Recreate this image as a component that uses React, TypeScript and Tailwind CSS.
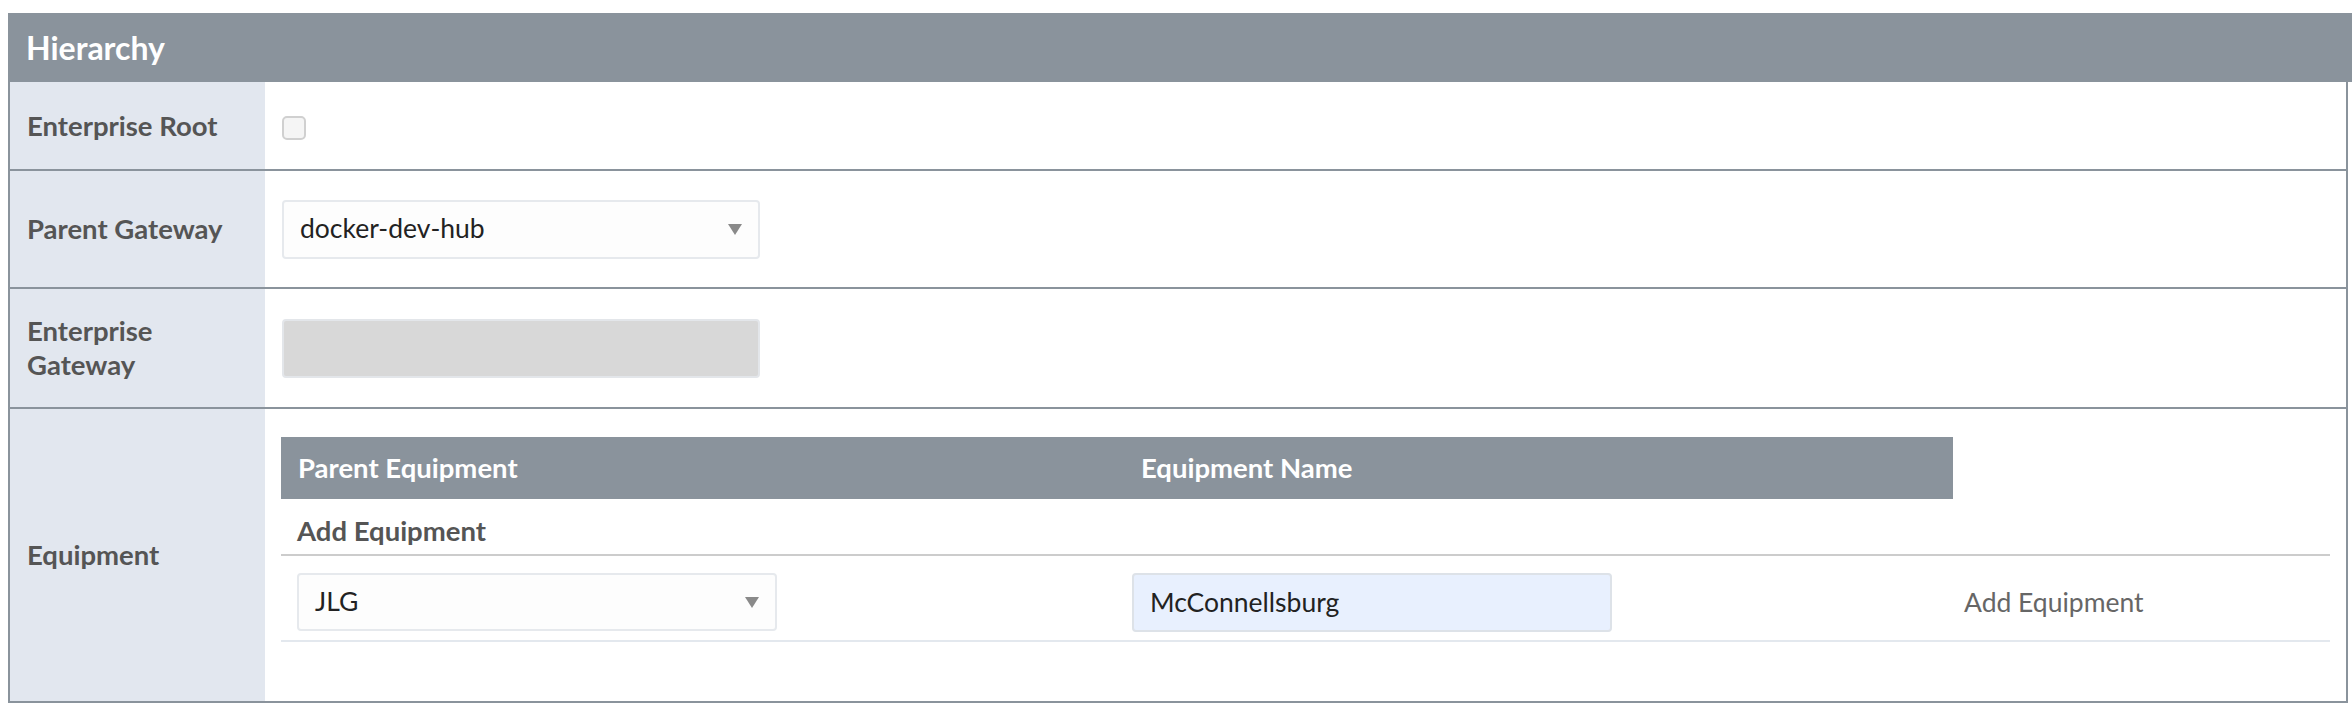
const font = { fontFamily: "Lato, 'Open Sans', sans-serif" };

function Caret() {
  return (
    <svg width="14" height="11" viewBox="0 0 14 11" className="shrink-0">
      <polygon points="0,0 14,0 7,11" fill="#8a8a8a" />
    </svg>
  );
}

function SelectBox({ value, width, height }: { value: string; width: string; height: string }) {
  return (
    <div
      className={`${width} ${height} flex items-center justify-between rounded-[4px] border-2 border-[#e6e9ed] bg-[#fdfdfd] pl-[16px] pr-[16px] text-[26.5px] text-[#222]`}
    >
      <span>{value}</span>
      <Caret />
    </div>
  );
}

function Label({ children }: { children: React.ReactNode }) {
  return (
    <div className="flex w-[255px] shrink-0 items-center bg-[#e2e7ef] pl-[17px] pr-[16px] text-[27.5px] font-bold leading-[34px] text-[#555]">
      {children}
    </div>
  );
}

export default function App() {
  return (
    <div className="min-h-[704px] bg-white pt-[13px] pl-[8px]" style={font}>
      <div className="flex h-[69px] items-center bg-[#8a939c] pl-[18px] text-[32px] font-bold text-white">
        Hierarchy
      </div>
      <div className="mr-[4px] border-x-2 border-b-2 border-[#8a939c]">
        {/* Enterprise Root */}
        <div className="flex h-[89px] border-b-2 border-[#8a939c]">
          <Label>Enterprise Root</Label>
          <div className="flex flex-1 items-center pl-[17px] pt-[4px]">
            <div className="h-[24px] w-[24px] rounded-[5px] border-2 border-[#d0d0d0] bg-[#f5f5f5]" />
          </div>
        </div>

        {/* Parent Gateway */}
        <div className="flex h-[118px] border-b-2 border-[#8a939c]">
          <Label>Parent Gateway</Label>
          <div className="flex flex-1 items-center pl-[17px]">
            <SelectBox value="docker-dev-hub" width="w-[478px]" height="h-[59px]" />
          </div>
        </div>

        {/* Enterprise Gateway */}
        <div className="flex h-[120px] border-b-2 border-[#8a939c]">
          <Label>
            Enterprise
            <br />
            Gateway
          </Label>
          <div className="flex flex-1 items-center pl-[17px]">
            <div className="h-[59px] w-[478px] rounded-[4px] border-2 border-[#e3e6ea] bg-[#d8d8d8]" />
          </div>
        </div>

        {/* Equipment */}
        <div className="flex h-[292px]">
          <Label>Equipment</Label>
          <div className="flex-1 pl-[16px] pr-[16px] pt-[28px]">
            <div className="flex h-[62px] w-[1672px] items-center bg-[#8a939c] text-[27.5px] font-bold text-white">
              <div className="w-[843px] pl-[17px]">Parent Equipment</div>
              <div className="pl-[17px]">Equipment Name</div>
            </div>
            <div className="flex h-[57px] items-center border-b-2 border-[#cccccc] pl-[16px] pt-[8px] text-[27.5px] font-bold text-[#555]">
              Add Equipment
            </div>
            <div className="flex h-[86px] items-start border-b-2 border-[#e3e8ee] pt-[17px]">
              <div className="w-[843px] pl-[16px]">
                <SelectBox value="JLG" width="w-[480px]" height="h-[58px]" />
              </div>
              <div className="w-[829px] pl-[8px]">
                <div className="flex h-[59px] w-[480px] items-center rounded-[4px] border-2 border-[#dde2e8] bg-[#e8f0fe] pl-[16px] text-[26.5px] text-[#222]">
                  McConnellsburg
                </div>
              </div>
              <div className="flex h-[59px] items-center pl-[11px] text-[26.5px] text-[#666]">
                Add Equipment
              </div>
            </div>
          </div>
        </div>
      </div>
    </div>
  );
}
